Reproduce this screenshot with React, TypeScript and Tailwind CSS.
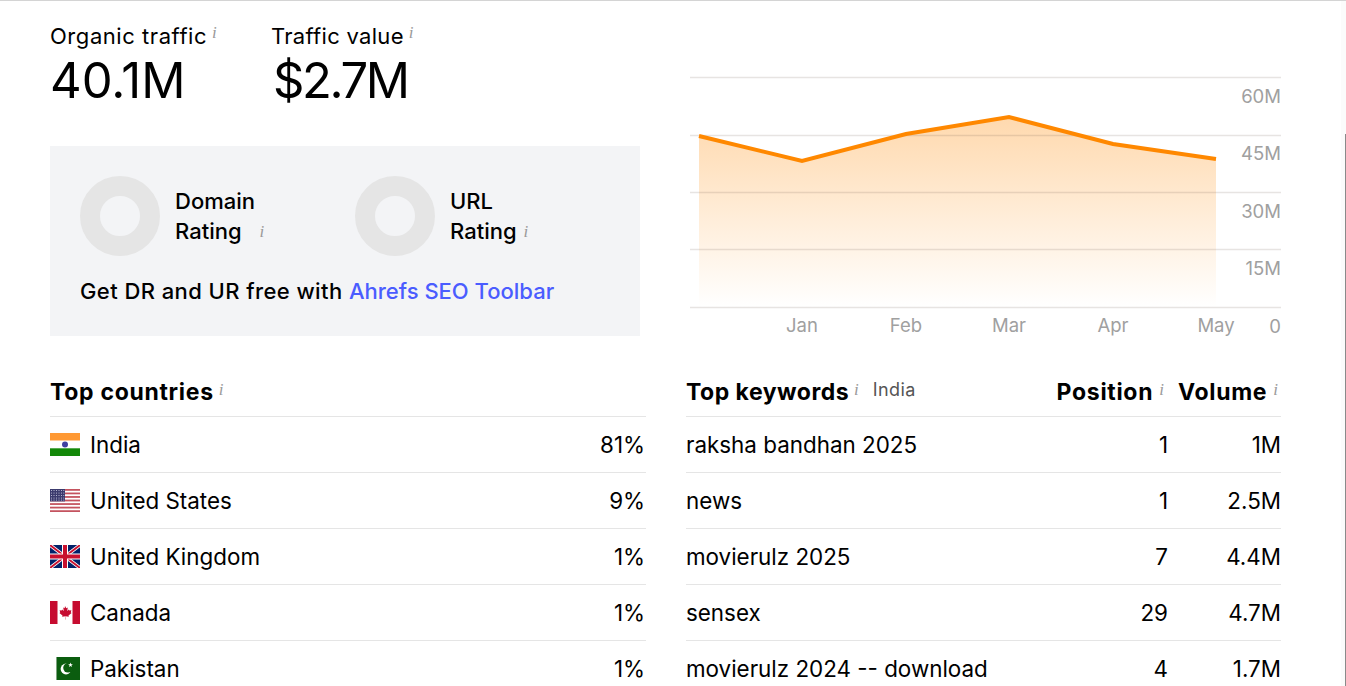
import React from 'react';

const Info = ({ className = '' }: { className?: string }) => (
  <span className={`font-['Liberation_Serif',serif] font-normal italic text-[17px] leading-none text-[#9a9a9a] ${className}`}>i</span>
);

const IndiaFlag = () => (
  <svg width="30" height="23" viewBox="0 0 30 23">
    <rect width="30" height="7.7" fill="#ff9933" />
    <rect y="7.7" width="30" height="7.6" fill="#fff" />
    <rect y="15.3" width="30" height="7.7" fill="#138808" />
    <circle cx="15" cy="11.5" r="3" fill="#000080" opacity="0.75" />
  </svg>
);

const UsFlag = () => (
  <svg width="30" height="23" viewBox="0 0 30 23">
    <rect width="30" height="23" fill="#fff" />
    {[0, 2, 4, 6, 8, 10, 12].map((i) => (
      <rect key={i} y={i * 1.77} width="30" height="1.77" fill="#c4535f" />
    ))}
    <rect width="15" height="12.4" fill="#3c3b6e" />
    {[1.5, 4, 6.5, 9, 11].map((y) =>
      [1.5, 4, 6.5, 9, 11.5, 13.8].map((x) => <circle key={`${x}-${y}`} cx={x} cy={y} r="0.55" fill="#c9cbe0" />)
    )}
  </svg>
);

const UkFlag = () => (
  <svg width="30" height="23" viewBox="0 0 30 23">
    <rect width="30" height="23" fill="#012169" />
    <path d="M0 0L30 23M30 0L0 23" stroke="#fff" strokeWidth="3.4" />
    <path d="M0 0L30 23M30 0L0 23" stroke="#c8102e" strokeWidth="1.8" />
    <path d="M15 0V23M0 11.5H30" stroke="#fff" strokeWidth="6" />
    <path d="M15 0V23M0 11.5H30" stroke="#c8102e" strokeWidth="4" />
  </svg>
);

const CanadaFlag = () => (
  <svg width="30" height="23" viewBox="0 0 30 23">
    <rect width="30" height="23" fill="#fff" />
    <rect width="7.5" height="23" fill="#c60c30" />
    <rect x="22.5" width="7.5" height="23" fill="#c60c30" />
    <path
      d="M15 5l1.3 2.3 1.5-.7-.6 3.4 1.7-1.6.5 1.2 2-.3-.6 2.2.8.5-3.1 2.5.3 1.2-3.2-.4.1 3.2h-.4l.1-3.2-3.2.4.3-1.2-3.1-2.5.8-.5-.6-2.2 2 .3.5-1.2 1.7 1.6-.6-3.4 1.5.7z"
      fill="#c60c30"
    />
  </svg>
);

const PakistanFlag = () => (
  <svg width="30" height="23" viewBox="0 0 30 23">
    <rect x="6.5" width="23.5" height="23" fill="#0b5d0f" />
    <rect x="6" width="1" height="23" fill="#7ea37f" />
    <circle cx="16" cy="12" r="5.4" fill="#fff" />
    <circle cx="18" cy="10.8" r="4.8" fill="#0b5d0f" />
    <path d="M20.5 5.5l.6 1.7 1.8-.1-1.4 1.1.5 1.7-1.5-1-1.5 1 .5-1.7-1.4-1.1 1.8.1z" fill="#fff" />
  </svg>
);

const countries = [
  { name: 'India', share: '81%', flag: <IndiaFlag /> },
  { name: 'United States', share: '9%', flag: <UsFlag /> },
  { name: 'United Kingdom', share: '1%', flag: <UkFlag /> },
  { name: 'Canada', share: '1%', flag: <CanadaFlag /> },
  { name: 'Pakistan', share: '1%', flag: <PakistanFlag /> },
];

const keywords = [
  { kw: 'raksha bandhan 2025', pos: '1', vol: '1M' },
  { kw: 'news', pos: '1', vol: '2.5M' },
  { kw: 'movierulz 2025', pos: '7', vol: '4.4M' },
  { kw: 'sensex', pos: '29', vol: '4.7M' },
  { kw: 'movierulz 2024 -- download', pos: '4', vol: '1.7M' },
];

const Chart = () => {
  const pts = '699,136 802,161 906,134 1009,117 1113,144 1216,159';
  return (
    <svg width="600" height="270" viewBox="686 70 600 270" className="block">
      <defs>
        <linearGradient id="fill" x1="0" y1="117" x2="0" y2="307" gradientUnits="userSpaceOnUse">
          <stop offset="0" stopColor="#ffd9ae" />
          <stop offset="1" stopColor="#ffffff" />
        </linearGradient>
      </defs>
      <polygon points={`699,307 ${pts} 1216,307`} fill="url(#fill)" />
      {[77, 135, 192, 249, 307].map((y) => (
        <line key={y} x1="690" x2="1281" y1={y + 0.5} y2={y + 0.5} stroke="#6b5a4a" strokeOpacity="0.16" strokeWidth="1.3" />
      ))}
      <polyline points={pts} fill="none" stroke="#ff8800" strokeWidth="4" />
      <g fontSize="18.5" fill="#a0a0a0" textAnchor="end">
        <text x="1281" y="103">60M</text>
        <text x="1281" y="160">45M</text>
        <text x="1281" y="218">30M</text>
        <text x="1281" y="275">15M</text>
        <text x="1281" y="333">0</text>
      </g>
      <g fontSize="18.5" fill="#a0a0a0" textAnchor="middle">
        <text x="802" y="332">Jan</text>
        <text x="906" y="332">Feb</text>
        <text x="1009" y="332">Mar</text>
        <text x="1113" y="332">Apr</text>
        <text x="1216" y="332">May</text>
      </g>
    </svg>
  );
};

const Ring = () => (
  <div className="w-20 h-20 rounded-full border-[20px] border-[#e5e5e5] shrink-0" />
);

export default function App() {
  return (
    <div className="relative h-[686px] w-[1346px] overflow-hidden bg-white border-t border-[#d4d4d4] font-['Inter',sans-serif] text-black">
      <div className="flex pl-[50px] pr-[65px] gap-[46px]">
        <div className="w-[590px] shrink-0">
          <div className="flex pt-[21px]">
            <div className="w-[221px]">
              <div className="flex items-start gap-[5px]">
                <span className="text-[22px] leading-[28px] tracking-[0.55px]">Organic traffic</span>
                <Info className="mt-[2px]" />
              </div>
              <div className="text-[49px] leading-[58px] mt-[2px]">40.1M</div>
            </div>
            <div>
              <div className="flex items-start gap-[5px]">
                <span className="text-[22px] leading-[28px] tracking-[0.3px]">Traffic value</span>
                <Info className="mt-[2px]" />
              </div>
              <div className="text-[49px] leading-[58px] tracking-[-2.4px] mt-[2px] ml-[2px]">$2.7M</div>
            </div>
          </div>
          <div className="mt-[36px] h-[190px] bg-[#f3f4f6] pl-[30px] pt-[30px] font-medium">
            <div className="flex">
              <div className="flex items-center gap-[15px] w-[275px]">
                <Ring />
                <div className="text-[22px] leading-[30px]">
                  <div>Domain</div>
                  <div className="flex items-center gap-[18px]">Rating <Info /></div>
                </div>
              </div>
              <div className="flex items-center gap-[15px]">
                <Ring />
                <div className="text-[22px] leading-[30px]">
                  <div>URL</div>
                  <div className="flex items-center gap-[7px]">Rating <Info /></div>
                </div>
              </div>
            </div>
            <div className="mt-[20px] text-[22px] leading-[30px] tracking-[0.42px]">
              Get DR and UR free with <span className="text-[#4a5cff] tracking-normal">Ahrefs SEO Toolbar</span>
            </div>
          </div>
        </div>
        <div className="pt-[69px]">
          <Chart />
        </div>
      </div>

      <div className="flex pl-[50px] pr-[65px] gap-[40px] mt-[21px]">
        <div className="w-[596px] shrink-0">
          <div className="h-[56px] pt-[8px] flex items-center border-b border-[#e5e5e5]">
            <span className="font-bold text-[23px] tracking-[0.7px]">Top countries</span>
            <Info className="ml-[5px] mb-[6px]" />
          </div>
          {countries.map((c) => (
            <div key={c.name} className="h-[56px] flex items-center justify-between border-b border-[#e5e5e5] text-[22.4px]">
              <div className="flex items-center gap-[10px]">
                {c.flag}
                <span>{c.name}</span>
              </div>
              <span className="pr-[1px]">{c.share}</span>
            </div>
          ))}
        </div>
        <div className="w-[595px] shrink-0">
          <div className="h-[56px] pt-[8px] flex items-center border-b border-[#e5e5e5]">
            <span className="font-bold text-[23px] tracking-[0.5px]">Top keywords</span>
            <Info className="ml-[5px] mb-[6px]" />
            <span className="ml-[14px] mb-[6px] text-[18px] tracking-[0.4px] text-[#555]">India</span>
            <span className="ml-auto font-bold text-[23px] tracking-[0.7px]">Position</span>
            <Info className="ml-[6px] mb-[6px]" />
            <span className="ml-[14px] font-bold text-[23px] tracking-[0.7px]">Volume</span>
            <Info className="ml-[6px] mr-[3px] mb-[6px]" />
          </div>
          {keywords.map((k) => (
            <div key={k.kw} className="h-[56px] flex items-center border-b border-[#e5e5e5] text-[22.4px]">
              <span className="flex-1">{k.kw}</span>
              <span className="w-[60px] text-right">{k.pos}</span>
              <span className="w-[113px] text-right">{k.vol}</span>
            </div>
          ))}
        </div>
      </div>
      <div className="absolute right-0 top-0 h-full w-[5px] bg-[#fbfbfb]" />
      <div className="absolute right-0 top-[133px] h-[560px] w-px bg-[#8a8a8a]" />
    </div>
  );
}
